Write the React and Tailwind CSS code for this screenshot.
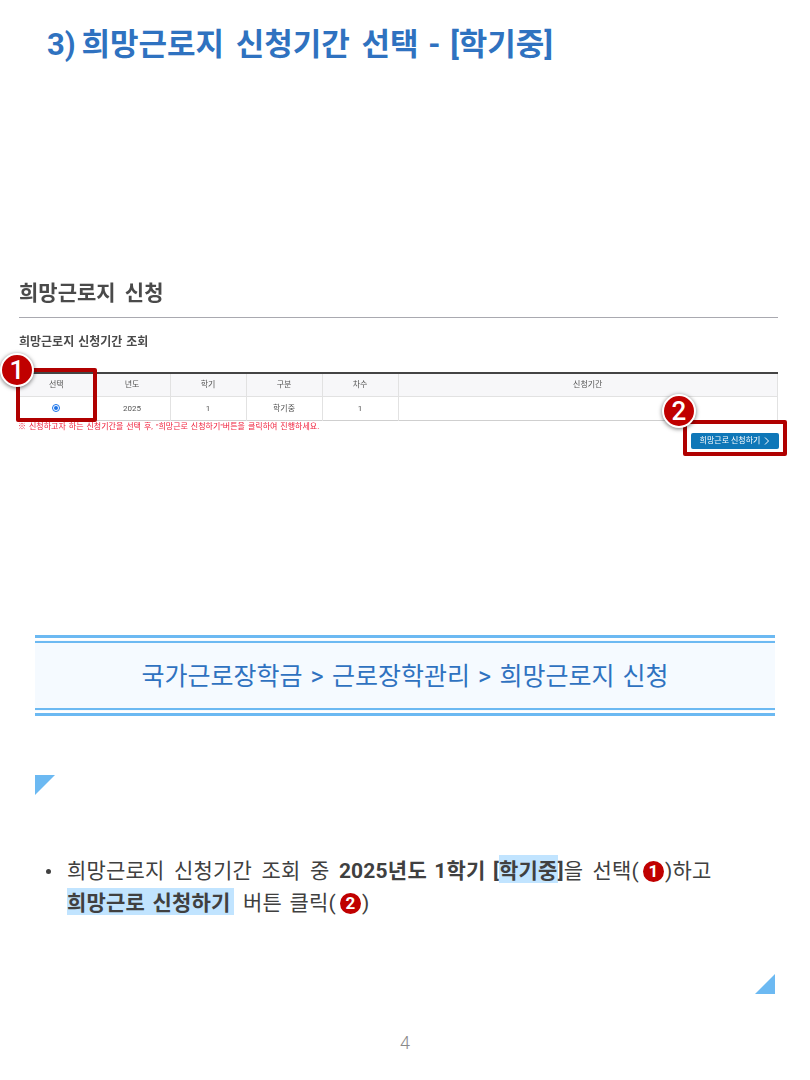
function Badge({ n, className }) {
  return (
    <div className={"absolute w-[34px] h-[34px] rounded-full bg-[#c00000] border-2 border-white shadow-[0_1px_4px_rgba(0,0,0,0.55)] flex items-center justify-center text-white text-[26px] font-medium leading-none " + className}>{n}</div>
  );
}
function Dot({ n }) {
  return (
    <span className="inline-flex w-[21px] h-[21px] rounded-full bg-[#c00000] text-white text-[17px] font-bold items-center justify-center leading-none align-[1px] ml-[4px] mr-px">{n}</span>
  );
}
export default function App() {
  const th = "border-r border-[#e2e2e2] font-normal text-[8px] text-[#555] text-center pt-px";
  const td = "border-r border-[#e2e2e2] text-[8px] text-[#555] text-center pt-px";
  return (
    <div className="w-[810px] h-[1080px] bg-white overflow-hidden font-['Roboto','Noto_Sans_CJK_KR',sans-serif] text-[#404040]">
      <h1 className="pl-[47px] pt-[21px] h-[66px] text-[31px] leading-[48px] font-bold text-[#2f72c0] [word-spacing:4px]"><span className="[word-spacing:-2px]">3) </span>희망근로지 신청기간 선택<span className="[word-spacing:2px]"> - </span>[학기중]</h1>

      <div className="relative mt-[212px] ml-[19px] w-[759px] h-[180px]">
        <div className="h-[28px] pt-px text-[21px] leading-[28px] font-bold text-[#4a4a4a] [word-spacing:4px] blur-[0.3px]">희망근로지 신청</div>
        <div className="mt-[11px] h-px bg-[#a9a9b0]" />
        <div className="mt-[14px] h-[19px] pt-px text-[12px] leading-[19px] font-bold text-[#4a4a4a] [word-spacing:1px] blur-[0.3px]">희망근로지 신청기간 조회</div>
        <table className="mt-[21px] w-[759px] table-fixed border-collapse border-t-2 border-[#444] blur-[0.3px]">
          <colgroup>
            <col className="w-[75px]" /><col className="w-[76px]" /><col className="w-[76px]" /><col className="w-[76px]" /><col className="w-[76px]" /><col />
          </colgroup>
          <thead>
            <tr className="h-[23px] bg-[#f7f7f9] border-b border-[#e2e2e2]">
              <th className={th}>선택</th><th className={th}>년도</th><th className={th}>학기</th><th className={th}>구분</th><th className={th}>차수</th><th className={th}>신청기간</th>
            </tr>
          </thead>
          <tbody>
            <tr className="h-[24px] border-b border-[#cfcfcf]">
              <td className={td}><span className="inline-block align-middle w-[8px] h-[8px] rounded-full border border-[#1a73e8] p-px"><span className="block w-full h-full rounded-full bg-[#1a73e8]" /></span></td>
              <td className={td}>2025</td><td className={td}>1</td><td className={td}>학기중</td><td className={td}>1</td><td className="border-r border-[#e2e2e2]" />
            </tr>
          </tbody>
        </table>
        <div className="mt-px -ml-px text-[8px] leading-[10px] text-[#f0203c] [word-spacing:1px] blur-[0.3px]">※ 신청하고자 하는 신청기간을 선택 후, "희망근로 신청하기"버튼을 클릭하여 진행하세요.</div>
        <div className="flex justify-end mt-px">
          <button className="w-[88px] h-[16px] mr-[-1px] rounded-[2px] bg-[#0f77b8] text-white text-[8px] leading-[16px] flex items-center justify-center gap-[4px] blur-[0.3px]">
            희망근로 신청하기
            <svg width="6" height="8" viewBox="0 0 6 8" fill="none" stroke="#ffffff" strokeWidth="1"><path d="M1 0.5 L4.5 4 L1 7.5" /></svg>
          </button>
        </div>

        <div className="absolute left-[-3px] top-[90px] w-[81px] h-[54px] border-[4px] border-[#b00000] rounded-[2px]" />
        <div className="absolute left-[664px] top-[142px] w-[104px] h-[36px] border-[4px] border-[#b00000] rounded-[2px]" />
        <Badge n="1" className="left-[-19px] top-[75px]" />
        <Badge n="2" className="left-[643px] top-[116px]" />
      </div>

      <div className="mt-[177px] mx-[35px] w-[740px] h-[81px] bg-[#f5faff] border-t-[3px] border-b-[3px] border-[#6cb9f2] flex flex-col">
        <div className="mt-[3px] h-[2px] bg-[#6cb9f2] shadow-[0_-3px_0_#ffffff]" />
        <div className="flex-1 flex items-center justify-center pt-px text-[25px] text-[#2f72c0] leading-none [word-spacing:2px]">국가근로장학금 &gt; 근로장학관리 &gt; 희망근로지 신청</div>
        <div className="mb-[3px] h-[2px] bg-[#6cb9f2] shadow-[0_3px_0_#ffffff]" />
      </div>

      <div className="mt-[59px] ml-[35px] w-[20px] h-[20px]">
        <svg width="20" height="20" viewBox="0 0 20 20"><polygon points="0,0 20,0 0,20" fill="#6cb9f2" /></svg>
      </div>

      <ul className="mt-[60px] ml-[67px] w-[700px] text-[21px] leading-[32px] tracking-[0.2px] [word-spacing:4px] text-[#404040] h-[119px]">
        <li className="relative">
          <span className="absolute left-[-21px] top-[14px] w-[5px] h-[5px] rounded-full bg-[#404040]" />
          희망근로지 신청기간 조회 중 <b className="[word-spacing:2px]">2025년도 1학기 [<span className="inline-block box-border h-[28px] pt-[4px] leading-[24px] bg-[#c1e4ff]">학기중</span>]</b>을 선택(<Dot n="1" />)하고
          <br />
          <b className="inline-block box-border h-[27px] pt-[3px] leading-[24px] bg-[#c1e4ff] pr-[3px] [word-spacing:2px]">희망근로 신청하기</b> <span className="[word-spacing:2px]">버튼 클릭(</span><Dot n="2" />)
        </li>
      </ul>

      <div className="ml-[755px] w-[20px] h-[20px]">
        <svg width="20" height="20" viewBox="0 0 20 20"><polygon points="20,0 20,20 0,20" fill="#6cb9f2" /></svg>
      </div>

      <div className="mt-[38px] text-center text-[18px] leading-[22px] font-light text-[#8a8a8a]">4</div>
    </div>
  );
}
